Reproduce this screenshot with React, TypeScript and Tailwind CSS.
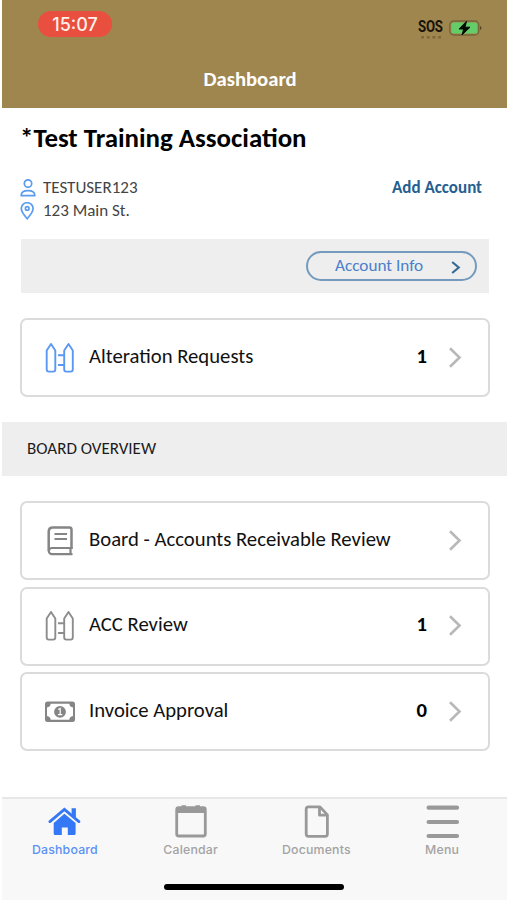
import type { ReactNode } from "react";

function FenceIcon({ className }: { className: string }) {
  return (
    <svg
      className={className}
      width="30"
      height="32"
      viewBox="0 0 30 32"
      fill="none"
      stroke="currentColor"
      strokeWidth="1.9"
      strokeLinejoin="round"
    >
      <path d="M1.700 8.600 6 1.900l4.300 6.700V27.600q0 2-2 2H3.700q-2 0-2-2z" />
      <path d="M19.200 8.600l4.300-6.700 4.300 6.700V27.600q0 2-2 2h-4.600q-2 0-2-2z" />
      <path d="M13 13.300h6M13 23h6" />
    </svg>
  );
}

function BookIcon() {
  return (
    <svg className="text-[#858585]" width="30" height="32" viewBox="0 0 30 32" fill="none" stroke="currentColor">
      <path d="M26.500 24V4.600q0-2.200-2.200-2.200H8Q3.700 2.400 3.700 6.600v19.300" strokeWidth="2.500" />
      <path d="M27.500 23H6.900a3 3 0 0 0 0 6.200H27.500M25.500 23v6" strokeWidth="2.200" />
      <path d="M9.500 9.100H22M9.500 14.100H22" strokeWidth="2" />
    </svg>
  );
}

function MoneyIcon() {
  return (
    <svg className="text-[#858585]" width="30" height="32" viewBox="0 0 30 32">
      <path
        fill="currentColor"
        fillRule="evenodd"
        d="M2.500 5.500h25q2.500 0 2.500 2.500v15.500q0 2.500-2.500 2.500h-25Q0 26 0 23.500V8q0-2.500 2.500-2.500zM5.700 7.700Q5.400 11 2 11.400v8.700q3.400.4 3.700 3.700h18.600q.3-3.300 3.700-3.700v-8.700q-3.400-.4-3.700-3.700z"
      />
      <circle cx="15" cy="15.800" r="5.900" fill="currentColor" />
      <path d="M13.200 13.500l2-1v5.800m-2.200.3h4.300" fill="none" stroke="#fff" strokeWidth="1.200" />
    </svg>
  );
}

function HomeIcon() {
  return (
    <svg width="34" height="34" viewBox="0 0 34 34" className="text-[#3478f6]">
      <path d="M1.900 17.600 16.400 5.400l14.500 12.200" fill="none" stroke="currentColor" strokeWidth="2.800" strokeLinecap="round" />
      <path d="M23.600 4.200h4.300v10L23.600 10.500z" fill="currentColor" />
      <path
        d="M16.400 9.700 27.600 19V29.500q0 1.500-1.500 1.500H19.800v-7.500h-6V31H7.200q-1.500 0-1.500-1.500V19z"
        fill="currentColor"
      />
    </svg>
  );
}

function CalendarIcon() {
  return (
    <svg width="34" height="34" viewBox="0 0 34 34" className="text-[#999]">
      <rect x="2.700" y="3.700" width="28.600" height="28.300" rx="2" fill="none" stroke="currentColor" strokeWidth="2.800" />
      <path d="M2 3h30v6H2zM7.500 1.200h4.500v3H7.500zM21.500 1.200H26v3h-4.500z" fill="currentColor" />
    </svg>
  );
}

function DocumentIcon() {
  return (
    <svg
      width="34"
      height="34"
      viewBox="0 0 34 34"
      fill="none"
      stroke="currentColor"
      strokeWidth="2.800"
      strokeLinejoin="round"
      className="text-[#999]"
    >
      <path d="M9.300 2.900H21l7.400 8V30q0 2.300-2.300 2.300h-16.600Q7.200 32.300 7.200 30V5.200q0-2.300 2.300-2.300z" />
      <path d="M20.500 3.300v7.900h7.700" />
    </svg>
  );
}

function MenuIcon() {
  return (
    <svg width="34" height="34" viewBox="0 0 34 34" className="overflow-visible text-[#999]">
      <path d="M3.600 3.700h28.400M3.600 18h28.400M3.600 32h28.400" stroke="currentColor" strokeWidth="4.200" strokeLinecap="round" />
    </svg>
  );
}

function Chevron() {
  return (
    <svg className="ml-[21px] text-[#b8b8b8]" width="14" height="22" viewBox="0 0 14 22" fill="none" stroke="currentColor" strokeWidth="2.600">
      <path d="m2 1.300 9.500 9.200L2 19.700" />
    </svg>
  );
}

type RowProps = { icon: ReactNode; label: string; count?: number };

function Row({ icon, label, count }: RowProps) {
  return (
    <div className="flex h-[79px] items-center rounded-[7px] border-2 border-[#dbdbdb] bg-white pr-[26px] pl-[23px]">
      {icon}
      <span className="ml-[14px] flex-1 pb-[2px] text-[20.700px] whitespace-nowrap text-[#111]">{label}</span>
      {count !== undefined && <span className="pb-[2px] text-[20.700px] font-bold text-black">{count}</span>}
      <Chevron />
    </div>
  );
}

const tabs = [
  { label: "Dashboard", icon: <HomeIcon />, active: true },
  { label: "Calendar", icon: <CalendarIcon />, active: false },
  { label: "Documents", icon: <DocumentIcon />, active: false },
  { label: "Menu", icon: <MenuIcon />, active: false },
];

export default function App() {
  return (
    <div className="flex h-[900px] w-full flex-col overflow-hidden bg-white pl-[2px] font-['Carlito','Lato',sans-serif] text-black">
      {/* Status bar and title */}
      <header className="flex h-[108px] shrink-0 flex-col bg-[#9f864f]">
        <div className="flex h-[58px] justify-between pr-[25px] pl-[36px]">
          <div className="mt-[11px] flex h-[26px] w-[74px] items-center justify-center rounded-full bg-[#e94f3f] font-['Inter',sans-serif] text-[18px] font-medium text-[#fff0e8]">
            15:07
          </div>
          <div className="mt-[18px] flex items-start gap-[6px]">
            <div className="flex w-[25px] flex-col items-center">
              <span className="scale-x-[0.8] font-['Roboto',sans-serif] text-[16.500px] leading-[18px] font-bold tracking-[-0.300px] text-[#171309]">
                SOS
              </span>
              <svg width="20" height="4" viewBox="0 0 20 4" fill="#7e693b">
                <rect width="3" height="2.500" />
                <rect x="5.700" width="3" height="2.500" />
                <rect x="11.400" width="3" height="2.500" />
                <rect x="17" width="3" height="2.500" />
              </svg>
            </div>
            <svg className="mt-[2px]" width="33" height="17" viewBox="0 0 33 17">
              <rect x=".8" y="1" width="29" height="14" rx="4" fill="none" stroke="#786339" strokeWidth="1.300" />
              <rect x="2.300" y="2.500" width="26" height="11" rx="2.500" fill="#64cc68" />
              <path d="M31 6q1.500.5 1.500 2t-1.500 2z" fill="#594722" />
              <path d="M17.500 1.300 10 9h4.700L13 15l8-7.800h-5z" fill="#070b05" stroke="#070b05" />
            </svg>
          </div>
        </div>
        <h1 className="pr-[9px] text-center text-[20.700px] leading-[42px] font-bold text-white">Dashboard</h1>
      </header>

      {/* Account */}
      <section className="h-[131px] shrink-0 pt-[12px] pr-[25px] pl-[18px]">
        <h2 className="text-[26.900px] leading-[36px] font-bold whitespace-nowrap">*Test Training Association</h2>
        <div className="mt-[21px] flex justify-between text-[17px] leading-[22px] text-[#444]">
          <div className="flex items-center">
            <svg className="text-[#5b9cf0]" width="16" height="18" viewBox="0 0 16 18" fill="none" stroke="currentColor" strokeWidth="1.700">
              <circle cx="8" cy="4.500" r="3.700" />
              <path d="M1.200 16.700q0-5 6.800-5t6.800 5z" strokeLinejoin="round" />
            </svg>
            <span className="ml-[7px]">TESTUSER123</span>
          </div>
          <a className="font-bold text-[#255f91]">Add Account</a>
        </div>
        <div className="mt-[1px] flex items-center text-[17px] leading-[22px] text-[#444]">
          <svg className="text-[#5b9cf0]" width="15" height="18" viewBox="0 0 15 18" fill="none" stroke="currentColor" strokeWidth="1.700">
            <path d="M7.200 16.700Q1.300 10.200 1.300 6.600a5.900 5.900 0 0 1 11.800 0q0 3.600-5.900 10.100z" />
            <circle cx="7.200" cy="6.400" r="1.800" />
          </svg>
          <span className="ml-[8px]">123 Main St.</span>
        </div>
      </section>

      <div className="mr-[18px] ml-[19px] flex h-[54px] shrink-0 items-center justify-end bg-[#eee] pr-[12px]">
        <button className="flex h-[30px] w-[171px] items-center rounded-full border-2 border-[#749bbd] pr-[14px] pl-[27px] text-[17.200px] text-[#4b80cc]">
          <span className="flex-1 pb-px text-left whitespace-nowrap">Account Info</span>
          <svg className="mt-[2px] text-[#376b94]" width="10" height="13" viewBox="0 0 10 13" fill="none" stroke="currentColor" strokeWidth="2.200">
            <path d="m1.200 1 6.500 5.500-6.500 5.500" />
          </svg>
        </button>
      </div>

      <div className="mt-[25px] mr-[17px] ml-[18px] shrink-0">
        <Row icon={<FenceIcon className="text-[#5b98f3]" />} label="Alteration Requests" count={1} />
      </div>

      {/* Board overview */}
      <h3 className="mt-[25px] h-[54px] shrink-0 bg-[#eee] pl-[25px] text-[17px] leading-[53px] text-[#1c1c1c]">BOARD OVERVIEW</h3>
      <div className="mt-[25px] mr-[17px] ml-[18px] flex shrink-0 flex-col gap-[6.500px]">
        <Row icon={<BookIcon />} label="Board - Accounts Receivable Review" />
        <Row icon={<FenceIcon className="text-[#8d8d8d]" />} label="ACC Review" count={1} />
        <Row icon={<MoneyIcon />} label="Invoice Approval" count={0} />
      </div>

      {/* Tab bar */}
      <nav className="mt-auto flex h-[103px] shrink-0 flex-col items-center border-t-2 border-[#e7e7e7] bg-[#f8f8f8] pr-[2px]">
        <div className="grid w-full grid-cols-4 pt-[5px] font-['Inter',sans-serif] text-[12.300px] tracking-[0.200px]">
          {tabs.map((tab) => (
            <div key={tab.label} className={`flex flex-col items-center ${tab.active ? "text-[#5b91f5]" : "text-[#a3a3a3]"}`}>
              {tab.icon}
              <span className="mt-[3px] leading-[18px] font-medium">{tab.label}</span>
            </div>
          ))}
        </div>
        <div className="mt-[25px] h-[6px] w-[180px] rounded-full bg-black" />
      </nav>
    </div>
  );
}
